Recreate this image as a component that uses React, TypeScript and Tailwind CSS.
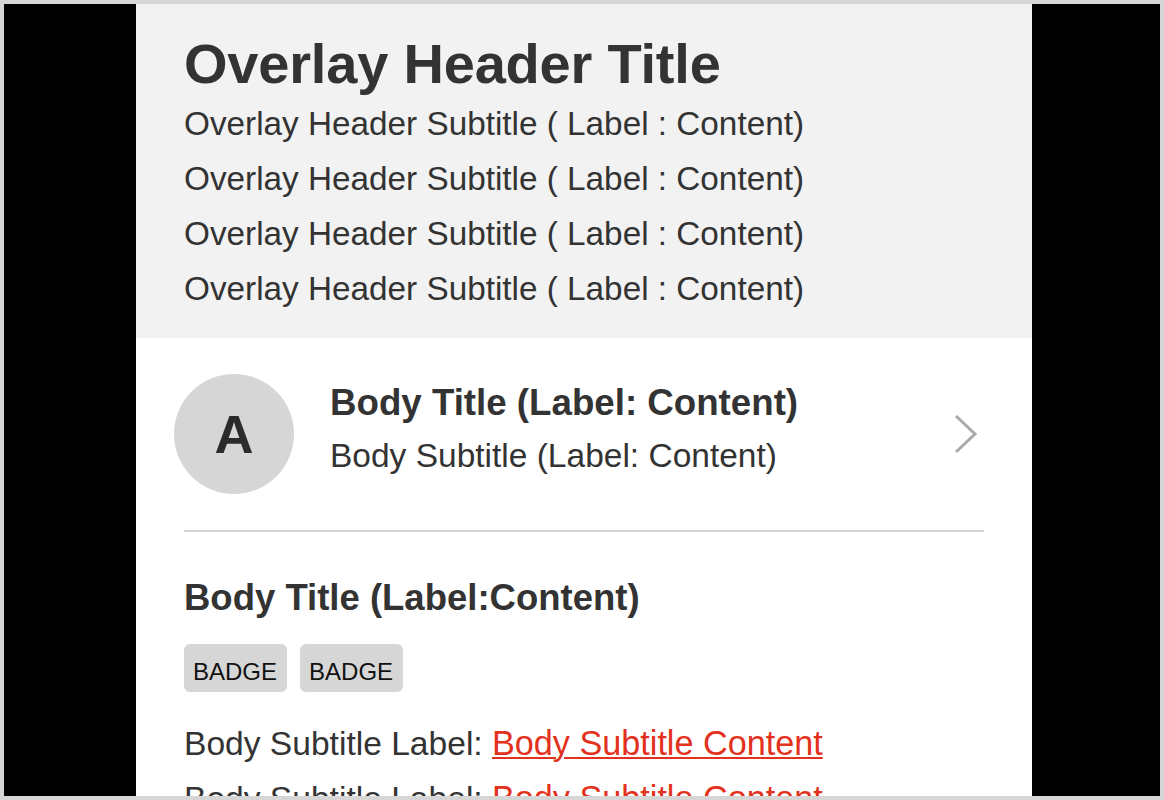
import React from 'react';

const subtitles = [1, 2, 3, 4];

function Chevron() {
  return (
    <svg width="24" height="40" viewBox="0 0 24 40" fill="none" className="shrink-0">
      <path d="M2 2 L21 20 L2 38" stroke="#aaaaaa" strokeWidth="3" />
    </svg>
  );
}

function Badge({ children }: { children: React.ReactNode }) {
  return (
    <span className="h-[48px] rounded-md bg-[#d6d6d6] pl-[9px] pr-[10px] pt-2 text-[24px] leading-[40px] text-[#111]">
      {children}
    </span>
  );
}

export default function App() {
  return (
    <div
      className="h-[800px] w-full overflow-hidden border-4 border-[#d6d6d6] bg-black pl-[132px]"
      style={{ fontFamily: '"Liberation Sans", Arial, sans-serif' }}
    >
      <div className="h-full w-[896px] bg-white text-[#333]">
        {/* header */}
        <div className="bg-[#f2f2f2] px-12 pt-[27px] pb-[22px]">
          <h1 className="text-[56px] font-bold leading-[65px] tracking-[-0.2px]">Overlay Header Title</h1>
          {subtitles.map((i) => (
            <p key={i} className="text-[33.3px] leading-[55px]">
              Overlay Header Subtitle ( Label : Content)
            </p>
          ))}
        </div>

        <div className="px-12">
          {/* list row */}
          <div className="flex items-center py-9">
            <div className="ml-[-10px] flex h-[120px] w-[120px] shrink-0 items-center justify-center rounded-full bg-[#d6d6d6]">
              <span className="text-[54px] font-bold leading-none text-[#2b2b2b]">A</span>
            </div>
            <div className="ml-9 flex-1">
              <p className="text-[36.7px] font-bold leading-[44px]">Body Title (Label: Content)</p>
              <p className="text-[33.5px] leading-[62px]">Body Subtitle (Label: Content)</p>
            </div>
            <div className="mr-[6px]">
              <Chevron />
            </div>
          </div>
          <div className="h-[2px] bg-[#d6d6d6]" />

          {/* detail */}
          <div className="pt-11">
            <p className="text-[36.5px] font-bold leading-[44px]">Body Title (Label:Content)</p>
            <div className="mt-6 flex gap-[13px]">
              <Badge>BADGE</Badge>
              <Badge>BADGE</Badge>
            </div>
            <div className="mt-6">
              {[1, 2].map((i) => (
                <p key={i} className="text-[33.6px] leading-[55px]">
                  Body Subtitle Label:{' '}
                  <a
                    href="#"
                    className="text-[34.2px] text-[#e2311d] underline decoration-2 underline-offset-[2px]"
                  >
                    Body Subtitle Content
                  </a>
                </p>
              ))}
            </div>
          </div>
        </div>
      </div>
    </div>
  );
}
